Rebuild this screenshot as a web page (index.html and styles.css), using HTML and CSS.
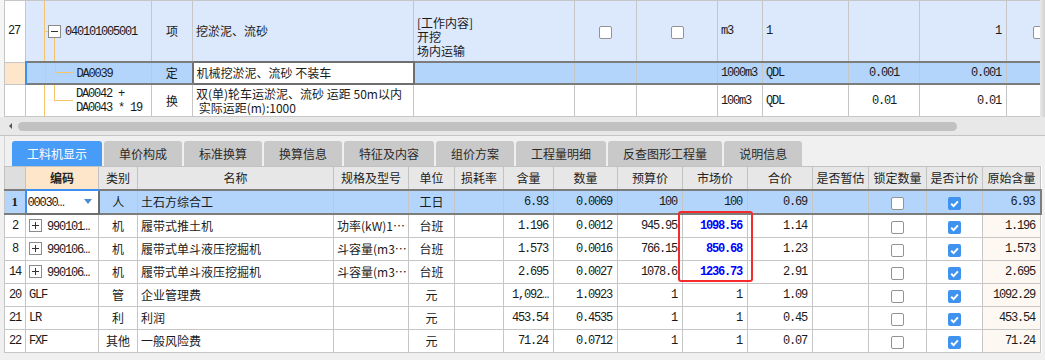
FILE: index.html
```html
<!DOCTYPE html>
<html lang="zh-CN">
<head>
    <meta charset="UTF-8">
    <title>工料机显示</title>
    <link rel="stylesheet" href="styles.css">
</head>
<body>
    <div class="top">
        <div class="top-view">
            <table class="grid grid-top">
                <colgroup>
                    <col style="width:21px"><col style="width:126px"><col style="width:41px"><col style="width:221px">
                    <col style="width:161px"><col style="width:62px"><col style="width:81px"><col style="width:45px">
                    <col style="width:86px"><col style="width:71px"><col style="width:87px"><col style="width:60px">
                </colgroup>
                <tr class="r-item">
                    <td class="m">27</td>
                    <td class="tree">
                        <span class="ln ln-a"></span>
                        <span class="ln ln-stub"></span>
                        <span class="pm"><svg width="13" height="13"><rect x="0.5" y="0.5" width="12" height="12" fill="#fff" stroke="#8a8a8a"/><path d="M3 6.5h7" stroke="#333"/></svg></span>
                        <span class="ln ln-b1"></span>
                        <span class="m code1">040101005001</span>
                    </td>
                    <td class="c">项</td>
                    <td>挖淤泥、流砂</td>
                    <td class="content"><div class="lines">[工作内容]<br>开挖<br>场内运输</div></td>
                    <td class="c"><span class="cb"></span></td>
                    <td class="c"><span class="cb"></span></td>
                    <td class="m">m3</td>
                    <td class="m">1</td>
                    <td></td>
                    <td class="m r">1</td>
                    <td class="last"><span class="cb"></span></td>
                </tr>
                <tr class="r-sel">
                    <td class="num-sel"></td>
                    <td class="tree">
                        <span class="ln ln-a"></span>
                        <span class="ln ln-b2"></span>
                        <span class="ln ln-h2"></span>
                        <span class="m code2">DA0039</span>
                    </td>
                    <td class="c">定</td>
                    <td class="edit">机械挖淤泥、流砂 不装车</td>
                    <td></td>
                    <td></td>
                    <td></td>
                    <td class="m">1000m3</td>
                    <td class="m">QDL</td>
                    <td class="m c">0.001</td>
                    <td class="m r">0.001</td>
                    <td></td>
                </tr>
                <tr class="r-sub">
                    <td></td>
                    <td class="tree">
                        <span class="ln ln-a"></span>
                        <span class="ln ln-b3"></span>
                        <span class="ln ln-h3"></span>
                        <span class="m code3">DA0042 +<br>DA0043 * 19</span>
                    </td>
                    <td class="c">换</td>
                    <td class="two">双(单)轮车运淤泥、流砂 运距 50m以内<br>&nbsp;实际运距(m):1000</td>
                    <td></td>
                    <td></td>
                    <td></td>
                    <td class="m">100m3</td>
                    <td class="m">QDL</td>
                    <td class="m c">0.01</td>
                    <td class="m r">0.01</td>
                    <td></td>
                </tr>
            </table>
        </div>
        <div class="vbar"></div>
    </div>

    <div class="hscroll">
        <span class="arrow"></span>
        <span class="thumb"></span>
    </div>

    <div class="panel">
        <div class="tabs">
            <span class="tab active">工料机显示</span>
            <span class="tab">单价构成</span>
            <span class="tab">标准换算</span>
            <span class="tab">换算信息</span>
            <span class="tab">特征及内容</span>
            <span class="tab">组价方案</span>
            <span class="tab">工程量明细</span>
            <span class="tab">反查图形工程量</span>
            <span class="tab">说明信息</span>
        </div>

        <div class="sheet">
            <table class="grid grid-bottom">
                <colgroup>
                    <col style="width:21px"><col style="width:73px"><col style="width:39px"><col style="width:196px">
                    <col style="width:75px"><col style="width:46px"><col style="width:49px"><col style="width:50px">
                    <col style="width:64px"><col style="width:65px"><col style="width:65px"><col style="width:65px">
                    <col style="width:56px"><col style="width:58px"><col style="width:56px"><col style="width:58px">
                </colgroup>
                <tr class="head">
                    <th class="corner"></th>
                    <th class="sorted">编码</th>
                    <th>类别</th>
                    <th>名称</th>
                    <th>规格及型号</th>
                    <th>单位</th>
                    <th>损耗率</th>
                    <th>含量</th>
                    <th>数量</th>
                    <th>预算价</th>
                    <th>市场价</th>
                    <th>合价</th>
                    <th>是否暂估</th>
                    <th>锁定数量</th>
                    <th>是否计价</th>
                    <th>原始含量</th>
                </tr>
                <tr class="sel">
                    <td class="num-sel one">1</td>
                    <td class="edit code-edit"><span class="m">00030…</span><span class="drop"></span></td>
                    <td class="c">人</td>
                    <td>土石方综合工</td>
                    <td></td>
                    <td class="c">工日</td>
                    <td></td>
                    <td class="m r">6.93</td>
                    <td class="m r">0.0069</td>
                    <td class="m r">100</td>
                    <td class="m r">100</td>
                    <td class="m r">0.69</td>
                    <td></td>
                    <td class="c"><span class="cb"></span></td>
                    <td class="c"><span class="cb on"><svg width="13" height="13" viewBox="0 0 13 13"><path d="M3.2 6.8l2.4 2.3 4.3-4.7" stroke="#fff" stroke-width="2" fill="none"/></svg></span></td>
                    <td class="m r sel-end">6.93</td>
                </tr>
                <tr>
                    <td class="m c">2</td>
                    <td class="m"><span class="pm"><svg width="13" height="13"><rect x="0.5" y="0.5" width="12" height="12" fill="#fff" stroke="#8a8a8a"/><path d="M3 6.5h7M6.5 3v7" stroke="#333"/></svg></span>990101…</td>
                    <td class="c">机</td>
                    <td>履带式推土机</td>
                    <td>功率(kW)1…</td>
                    <td class="c">台班</td>
                    <td></td>
                    <td class="m r">1.196</td>
                    <td class="m r">0.0012</td>
                    <td class="m r">945.95</td>
                    <td class="m r price">1098.56</td>
                    <td class="m r">1.14</td>
                    <td></td>
                    <td class="c"><span class="cb"></span></td>
                    <td class="c"><span class="cb on"><svg width="13" height="13" viewBox="0 0 13 13"><path d="M3.2 6.8l2.4 2.3 4.3-4.7" stroke="#fff" stroke-width="2" fill="none"/></svg></span></td>
                    <td class="m r orig">1.196</td>
                </tr>
                <tr>
                    <td class="m c">8</td>
                    <td class="m"><span class="pm"><svg width="13" height="13"><rect x="0.5" y="0.5" width="12" height="12" fill="#fff" stroke="#8a8a8a"/><path d="M3 6.5h7M6.5 3v7" stroke="#333"/></svg></span>990106…</td>
                    <td class="c">机</td>
                    <td>履带式单斗液压挖掘机</td>
                    <td>斗容量(m3…</td>
                    <td class="c">台班</td>
                    <td></td>
                    <td class="m r">1.573</td>
                    <td class="m r">0.0016</td>
                    <td class="m r">766.15</td>
                    <td class="m r price">850.68</td>
                    <td class="m r">1.23</td>
                    <td></td>
                    <td class="c"><span class="cb"></span></td>
                    <td class="c"><span class="cb on"><svg width="13" height="13" viewBox="0 0 13 13"><path d="M3.2 6.8l2.4 2.3 4.3-4.7" stroke="#fff" stroke-width="2" fill="none"/></svg></span></td>
                    <td class="m r orig">1.573</td>
                </tr>
                <tr>
                    <td class="m c">14</td>
                    <td class="m"><span class="pm"><svg width="13" height="13"><rect x="0.5" y="0.5" width="12" height="12" fill="#fff" stroke="#8a8a8a"/><path d="M3 6.5h7M6.5 3v7" stroke="#333"/></svg></span>990106…</td>
                    <td class="c">机</td>
                    <td>履带式单斗液压挖掘机</td>
                    <td>斗容量(m3…</td>
                    <td class="c">台班</td>
                    <td></td>
                    <td class="m r">2.695</td>
                    <td class="m r">0.0027</td>
                    <td class="m r">1078.6</td>
                    <td class="m r price">1236.73</td>
                    <td class="m r">2.91</td>
                    <td></td>
                    <td class="c"><span class="cb"></span></td>
                    <td class="c"><span class="cb on"><svg width="13" height="13" viewBox="0 0 13 13"><path d="M3.2 6.8l2.4 2.3 4.3-4.7" stroke="#fff" stroke-width="2" fill="none"/></svg></span></td>
                    <td class="m r orig">2.695</td>
                </tr>
                <tr>
                    <td class="m c">20</td>
                    <td class="m">GLF</td>
                    <td class="c">管</td>
                    <td>企业管理费</td>
                    <td></td>
                    <td class="c">元</td>
                    <td></td>
                    <td class="m r">1,092…</td>
                    <td class="m r">1.0923</td>
                    <td class="m r">1</td>
                    <td class="m r">1</td>
                    <td class="m r">1.09</td>
                    <td></td>
                    <td class="c"><span class="cb"></span></td>
                    <td class="c"><span class="cb on"><svg width="13" height="13" viewBox="0 0 13 13"><path d="M3.2 6.8l2.4 2.3 4.3-4.7" stroke="#fff" stroke-width="2" fill="none"/></svg></span></td>
                    <td class="m r orig">1092.29</td>
                </tr>
                <tr>
                    <td class="m c">21</td>
                    <td class="m">LR</td>
                    <td class="c">利</td>
                    <td>利润</td>
                    <td></td>
                    <td class="c">元</td>
                    <td></td>
                    <td class="m r">453.54</td>
                    <td class="m r">0.4535</td>
                    <td class="m r">1</td>
                    <td class="m r">1</td>
                    <td class="m r">0.45</td>
                    <td></td>
                    <td class="c"><span class="cb"></span></td>
                    <td class="c"><span class="cb on"><svg width="13" height="13" viewBox="0 0 13 13"><path d="M3.2 6.8l2.4 2.3 4.3-4.7" stroke="#fff" stroke-width="2" fill="none"/></svg></span></td>
                    <td class="m r orig">453.54</td>
                </tr>
                <tr>
                    <td class="m c">22</td>
                    <td class="m">FXF</td>
                    <td class="c">其他</td>
                    <td>一般风险费</td>
                    <td></td>
                    <td class="c">元</td>
                    <td></td>
                    <td class="m r">71.24</td>
                    <td class="m r">0.0712</td>
                    <td class="m r">1</td>
                    <td class="m r">1</td>
                    <td class="m r">0.07</td>
                    <td></td>
                    <td class="c"><span class="cb"></span></td>
                    <td class="c"><span class="cb on"><svg width="13" height="13" viewBox="0 0 13 13"><path d="M3.2 6.8l2.4 2.3 4.3-4.7" stroke="#fff" stroke-width="2" fill="none"/></svg></span></td>
                    <td class="m r orig">71.24</td>
                </tr>
            </table>
            <div class="mark"></div>
        </div>
    </div>
</body>
</html>
```

FILE: styles.css
```css
body {
    margin: 0;
    width: 1045px;
    height: 360px;
    overflow: hidden;
    background-color: #f0f0f0;
    font-family: "Noto Sans CJK SC", sans-serif;
    font-size: 12px;
    color: #1a1a1a;
}

/* grids */
.grid {
    border-collapse: collapse;
    table-layout: fixed;
}
.grid td,
.grid th {
    border: 1px solid #c6c6c6;
    padding: 0 3px;
    white-space: nowrap;
    overflow: hidden;
    line-height: 14px;
    background-clip: padding-box;
}
.m {
    font-family: "Liberation Mono", monospace;
    font-size: 12px;
    letter-spacing: -1.2px;
}
.c { text-align: center; }
.r { text-align: right; padding-right: 5px !important; }

/* top grid */
.top {
    display: flex;
    height: 117px;
    overflow: hidden;
}
.top-view {
    width: 1040px;
    overflow: hidden;
    padding-left: 4px;
    box-sizing: border-box;
    background-color: #f5f5f5;
}
.grid-top {
    width: 1062px;
    background-color: #fff;
}
.grid-top .r-item td {
    height: 60px;
    background-color: #dce8fc;
}
.grid-top .r-item td:first-child {
    background-color: #fff;
    padding-left: 3px;
}
.grid-top .r-sel td {
    height: 20px;
    background-color: #b3d5fb;
    border-top: 2px solid #7c7c7c;
    border-bottom: 2px solid #7c7c7c;
}
.grid-top .r-sub td {
    height: 31px;
}
.grid-top td.num-sel,
.grid-bottom td.num-sel {
    background-color: #fde6c9;
    border-top-color: #c6c6c6;
    border-top-width: 1px;
    border-bottom-color: #c6c6c6;
    border-bottom-width: 1px;
    border-right: 2px solid #3d8ff0;
}
.grid-top .r-sel td.edit,
.grid-bottom .sel td.edit {
    background-color: #fff;
    border: 2px solid #6f6f6f;
}
.content {
    vertical-align: top;
}
.content .lines {
    padding-top: 15px;
}
.grid-top td.last {
    padding-left: 26px;
}

/* tree connectors */
.tree {
    position: relative;
}
.ln {
    position: absolute;
    background-color: #f6c46c;
}
.ln-a { left: 18px; top: -1px; bottom: -1px; width: 1px; }
.ln-stub { left: 18px; top: 30px; width: 5px; height: 1px; }
.ln-b1 { left: 28px; top: 37px; bottom: -1px; width: 1px; }
.ln-b2 { left: 28px; top: -1px; height: 11px; width: 1px; }
.ln-h2 { left: 28px; top: 9px; width: 19px; height: 1px; }
.ln-b3 { left: 28px; top: -1px; height: 16px; width: 1px; }
.ln-h3 { left: 28px; top: 15px; width: 19px; height: 1px; }
.tree .pm {
    position: absolute;
    left: 22px;
    top: 24px;
}
.code1 { margin-left: 36px; }
.code2,
.code3 {
    display: inline-block;
    margin-left: 47px;
}

.vbar {
    width: 5px;
    background: linear-gradient(to right, #e8e8e8, #d2d2d2);
}

/* horizontal scroll bar */
.hscroll {
    position: relative;
    height: 18px;
    background-color: #e8e8e8;
    border-bottom: 1px solid #c4c4c4;
}
.hscroll .arrow {
    position: absolute;
    left: 9px;
    top: 6px;
    border-top: 3px solid transparent;
    border-bottom: 3px solid transparent;
    border-right: 3px solid #555;
}
.hscroll .thumb {
    position: absolute;
    left: 18px;
    top: 5px;
    width: 939px;
    height: 9px;
    border-radius: 5px;
    background-color: #c1c1c1;
}

/* tabs */
.panel {
    margin-left: 4px;
    border-left: 1px solid #d4d4d4;
}
.tabs {
    display: flex;
    gap: 2px;
    padding: 5px 0 0 7px;
    height: 25px;
}
.tab {
    padding: 0 15px;
    height: 25px;
    line-height: 25px;
    background-color: #c9c9c9;
    color: #2a2a2a;
    border-radius: 3px 3px 0 0;
}
.tab.active {
    background-color: #469cf6;
    color: #fff;
}

/* bottom grid */
.sheet {
    position: relative;
    margin-left: -1px;
}
.grid-bottom {
    width: 1036px;
    background-color: #fff;
}
.grid-bottom th {
    height: 22px;
    font-weight: normal;
    background-color: #e7e7e7;
    border-color: #c2c2c2;
    color: #222;
}
.grid-bottom th.corner {
    background-color: #dedede;
}
.grid-bottom th.sorted {
    background-color: #fde6c9;
    font-weight: bold;
    border-bottom: 2px solid #3d8ff0;
}
.grid-bottom td {
    height: 22px;
}
.grid-bottom .sel td {
    background-color: #b3d5fb;
    border-top: 2px solid #7c7c7c;
    border-bottom: 2px solid #7c7c7c;
}
.grid-bottom .sel td.sel-end {
    border-right: 2px solid #7c7c7c;
}
.grid-bottom td.one {
    font-family: "Liberation Serif", serif;
    font-weight: bold;
    font-size: 13px;
    letter-spacing: 0;
    text-align: center;
    border-right: 1px solid #c6c6c6;
}
.grid-bottom .sel td.code-edit {
    position: relative;
    border-left: 2px solid #3d8ff0;
    padding-left: 1px;
}
.drop {
    position: absolute;
    right: 6px;
    top: 8px;
    border-left: 4px solid transparent;
    border-right: 4px solid transparent;
    border-top: 5px solid #4d8ccc;
}
.grid-bottom .pm {
    display: inline-block;
    vertical-align: -2px;
    margin-right: 5px;
    height: 13px;
}
.grid-bottom td.orig {
    background-color: #fdf8f1;
}
.price {
    color: #0000ff;
    font-weight: bold;
}

/* check boxes */
.cb {
    display: inline-block;
    width: 13px;
    height: 13px;
    box-sizing: border-box;
    border: 1px solid #939393;
    border-radius: 2px;
    background-color: #fff;
    vertical-align: middle;
}
.cb.on {
    border: none;
    background-color: #3f93ee;
}
.cb svg {
    display: block;
}

/* note drawn over the market prices */
.mark {
    position: absolute;
    left: 674px;
    top: 45px;
    width: 75px;
    height: 71px;
    box-sizing: border-box;
    border: 2px solid #f52b2b;
    border-radius: 3px;
}
```
